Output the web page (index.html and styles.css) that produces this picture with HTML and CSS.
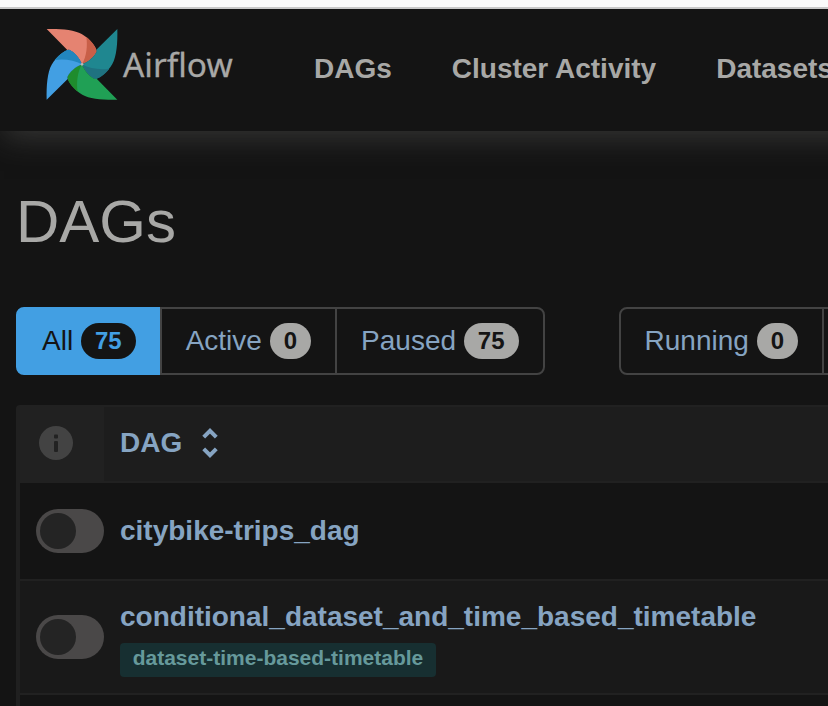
FILE: index.html
```
<!DOCTYPE html>
<html lang="en">
<head>
<meta charset="utf-8">
<title>DAGs - Airflow</title>
<link rel="stylesheet" href="styles.css">
</head>
<body>
<div class="window-edge"></div>
<header class="navbar">
  <a class="brand">
    <svg class="pinwheel" viewBox="0 0 252 252" aria-hidden="true">
      <defs>
        <path id="blade" d="M20 21C61 20 103 23 125 36C150 50 169 76 170 88C163 104 148 118 126 127C117 105 103 90 87 83L82 84Z"/>
        <path id="fold" d="M139 45C157 59 170 79 170 88C163 104 148 118 126 127C140 104 143 70 139 45Z"/>
      </defs>
      <g><use href="#blade" fill="#e58371"/><use href="#fold" fill="#c85f48"/></g>
      <g transform="rotate(90 126 127)"><use href="#blade" fill="#1f8790"/><use href="#fold" fill="#1f7280"/></g>
      <g transform="rotate(180 126 127)"><use href="#blade" fill="#20a055"/><use href="#fold" fill="#1f8c2d"/></g>
      <g transform="rotate(270 126 127)"><use href="#blade" fill="#429fe3"/><use href="#fold" fill="#2286be"/></g>
      <circle cx="126" cy="127" r="4" fill="#b9b9b7"/>
    </svg>
    <span class="brand-name">Airflow</span>
  </a>
  <nav class="menu"><a>DAGs</a><a>Cluster Activity</a><a>Datasets</a></nav>
</header>
<main>
  <h1>DAGs</h1>
  <div class="filters">
    <div class="group">
      <a class="btn active">All <span class="badge">75</span></a>
      <a class="btn">Active <span class="badge">0</span></a>
      <a class="btn">Paused <span class="badge">75</span></a>
    </div>
    <div class="group">
      <a class="btn">Running <span class="badge">0</span></a>
      <a class="btn"></a>
    </div>
  </div>
  <div class="table">
    <div class="row head">
      <div class="info-cell">
        <svg class="info" viewBox="0 0 34 34" aria-hidden="true"><circle cx="17" cy="17" r="17" fill="#434343"/><rect x="15" y="8.5" width="4" height="4" rx="1" fill="#222"/><rect x="15" y="15" width="4" height="11" rx="1" fill="#222"/></svg>
      </div>
      <div class="name-cell">
        <span class="col-title">DAG</span>
        <svg class="sort" viewBox="0 0 16 30" aria-hidden="true"><path d="M1.7 9.2L8 2.9L14.3 9.2M1.7 20.8L8 27.1L14.3 20.8"/></svg>
      </div>
    </div>
    <div class="row first">
      <span class="switch"></span>
      <div class="dag"><a>citybike-trips_dag</a></div>
    </div>
    <div class="row second">
      <span class="switch"></span>
      <div class="dag"><a>conditional_dataset_and_time_based_timetable</a><span class="tag">dataset-time-based-timetable</span></div>
    </div>
    <div class="row third"></div>
  </div>
</main>
</body>
</html>
```
FILE: styles.css
```
* { box-sizing: border-box; }
html { overflow: hidden; }
body {
  margin: 0;
  height: 706px;
  overflow: hidden;
  background: #141414;
  color: #a8a8a6;
  font: 28px/40px "Liberation Sans", Arial, sans-serif;
}
.window-edge { position: relative; z-index: 1; height: 9px; background: #fafafa; border-bottom: 2px solid #c8c8c8; }
.navbar {
  display: flex;
  height: 122px;
  margin-right: -30px;
  background: #141414;
  box-shadow: 4px 6px 28px rgba(72, 72, 70, .65);
  white-space: nowrap;
}
.brand { display: flex; width: 284px; flex: none; padding: 13px 0 0 40px; }
.pinwheel { width: 84px; height: 84px; flex: none; }
.brand-name { margin: 22px 0 0 -1px; font: 33.4px/40px "Noto Sans", sans-serif; -webkit-text-stroke: .3px #a8a8a6; }
.menu { display: flex; padding: 40px 0 0 30px; gap: 60px; font-weight: bold; }
main { padding: 57px 0 0 16px; }
h1 { margin: 0; font-size: 60px; line-height: 68px; font-weight: normal; }
.filters { display: flex; gap: 74px; margin-top: 51px; white-space: nowrap; }
.group { display: flex; flex: none; }
.group:last-child { flex: 1; }
.group:last-child .btn:last-child { flex: 1; padding: 0; border-right: 0; border-radius: 0; }
.btn {
  height: 68px;
  padding: 12px 24px;
  border: 2px solid #434343;
  color: #86a4c2;
  margin-left: -2px;
}
.btn:first-child { margin-left: 0; border-radius: 8px 0 0 8px; }
.btn:last-child { border-radius: 0 8px 8px 0; }
.btn.active { background: #429fe3; border-color: #429fe3; color: #141414; }
.badge {
  display: inline-block;
  position: relative;
  top: -2px;
  height: 36px;
  padding: 0 14.03px;
  border-radius: 20px;
  background: #a8a8a6;
  color: #141414;
  font-size: 24px;
  line-height: 35px;
  font-weight: bold;
  vertical-align: middle;
}
.active .badge { background: #141414; color: #429fe3; }
.table { margin-top: 30px; border-left: 4px solid #202020; border-radius: 4px 0 0 0; }
.row { display: flex; }
.head { height: 78px; background: #1d1d1d; border: solid #212121; border-width: 2px 0; }
.info-cell { width: 84px; padding: 19px 0 0 19px; background: #212121; }
.info { display: block; width: 34px; height: 34px; }
.name-cell { display: flex; padding: 16px 0 0 16px; gap: 20px; }
.col-title { color: #86a4c2; font-weight: bold; }
.sort { width: 16px; height: 30px; margin-top: 5px; fill: none; stroke: #86a4c2; stroke-width: 4; }
.first, .second { padding-left: 16px; align-items: center; gap: 16px; border-bottom: 2px solid #212121; }
.first { height: 98px; }
.second { height: 114px; background: #191919; }
.third { height: 11px; }
.switch { width: 68px; height: 44px; flex: none; padding: 4px; border-radius: 22px; background: #4a4848; }
.switch::before { content: ""; display: block; width: 36px; height: 36px; border-radius: 50%; background: #242424; }
.dag { display: flex; flex-direction: column; align-items: flex-start; color: #86a4c2; font-weight: bold; }
.tag {
  height: 34px;
  margin-top: 6px;
  padding: 0 12.7px;
  border-radius: 4px;
  background: #172f31;
  color: #66999b;
  font-size: 21px;
  line-height: 30px;
}
```
